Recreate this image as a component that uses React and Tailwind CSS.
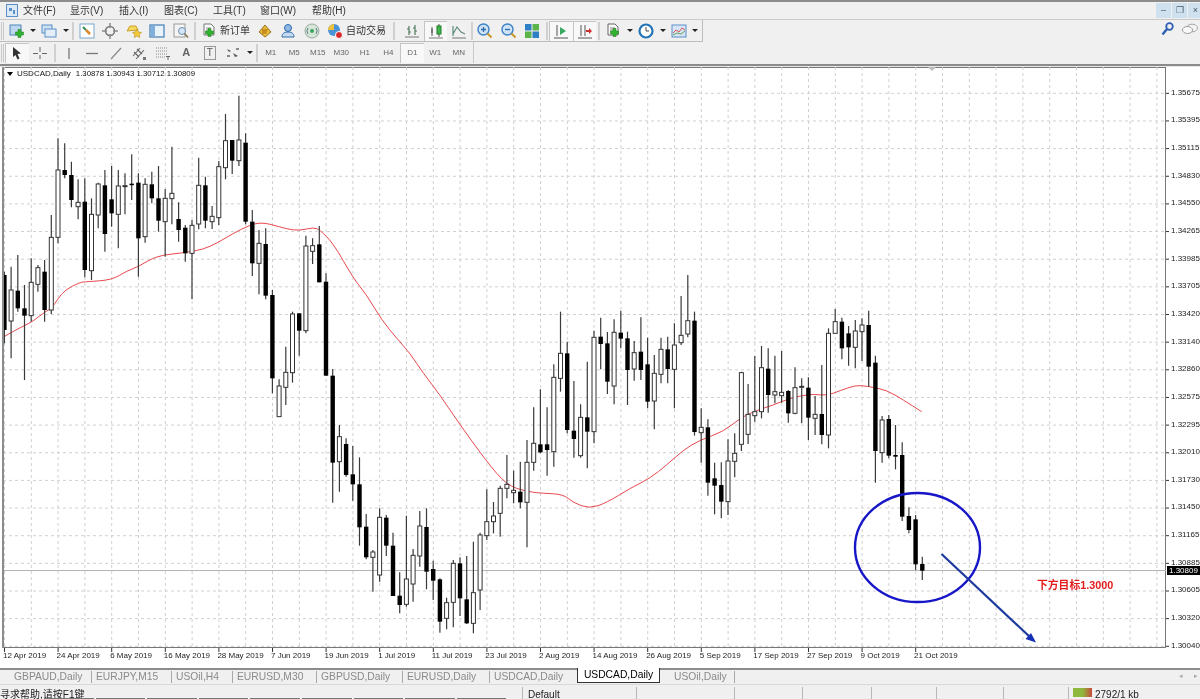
import React from "react";

const FONT = "font-['Liberation_Sans','Noto_Sans_CJK_SC',sans-serif]";

// [high, bodyTop, bodyBottom, low, black] read off the chart, in 3x pixels per block
const SEG_A = [
  [545,555,720,760,1],[530,600,693,805,0],[495,602,655,665,1],[585,655,677,870,1],[505,577,677,695,0],
  [525,533,583,605,0],[510,545,660,695,1],[375,442,660,672,0],[145,240,442,460,0],[160,240,255,265,1],
  [215,255,330,352,1],[268,337,350,388,0],[265,335,540,562,1],[325,373,542,570,0],[278,282,375,415,0],
  [240,286,432,485,1],[228,328,370,410,1],[240,288,373,475,0],[250,287,289,373,0],[193,281,285,330,1],
  [250,278,445,560,1],[265,283,440,458,0],[245,283,325,340,1],[228,325,392,425,1],[297,325,395,500,0],
  [170,310,326,403,0],[337,387,420,455,1],[405,413,490,515,1],[390,406,490,628,0],[203,286,402,418,0],
  [260,286,392,415,1],[348,379,395,417,0],[213,230,383,405,0],[72,152,233,268,0],[150,150,212,252,1],
  [17,150,212,228,0],[130,158,395,403,1],[360,395,520,558,1],[420,460,520,613,0],[415,462,617,628,1],
  [600,615,865,910,1],[868,888,980,980,0],[770,847,892,945,0],[665,672,848,878,0],[670,670,722,797,1],
  [437,468,722,730,0],[445,467,484,522,0],[408,463,577,577,1],[550,575,857,857,1],
];
const SEG_B = [
  [447,467,728,848,1],[615,650,725,815,0],[655,672,765,770,1],[678,763,793,842,1],[712,793,922,977,1],
  [882,920,1012,1018,1],[990,996,1012,1115,0],[865,892,1065,1085,0],[885,893,977,1008,1],[938,977,1128,1128,1],
  [1057,1127,1155,1180,1],[887,1077,1153,1160,0],[987,1006,1092,1145,0],[873,918,1008,1040,0],[865,921,1055,1108,1],
  [1022,1047,1082,1140,1],[1075,1078,1205,1238,1],[1133,1148,1195,1228,0],[1020,1030,1147,1222,0],[1012,1030,1135,1188,1],
  [1008,1138,1210,1212,1],[965,1118,1210,1240,0],[938,945,1110,1170,0],[808,905,947,960,0],[846,888,905,940,0],
  [797,805,880,950,0],[705,793,805,835,0],[752,811,818,850,0],[725,815,847,865,1],[660,727,847,982,0],
  [562,670,727,752,0],[508,673,697,700,1],[562,673,690,767,1],[433,472,695,740,0],[275,400,475,515,0],
  [365,400,630,640,1],[483,632,657,713,1],[553,592,707,713,0],[425,592,635,745,1],[332,352,635,670,0],
];
const SEG_C = [
  [143,200,222,298,1],[186,220,335,372,1],[148,187,348,403,0],[122,188,206,235,1],[185,205,300,405,1],
  [213,248,297,332,0],[142,245,300,330,1],[203,283,395,415,1],[255,310,393,478,0],[203,238,313,340,0],
  [200,238,297,340,1],[160,225,298,415,0],[78,196,218,225,0],[15,152,192,202,0],[125,152,486,497,1],
  [415,472,488,578,0],[448,472,638,677,1],[578,625,647,733,1],[577,645,695,745,1],[508,573,695,735,0],
  [490,550,574,622,0],[305,308,523,543,0],[342,433,493,522,0],[258,425,437,455,0],[228,293,425,445,0],
  [235,296,375,428,1],[257,365,375,400,0],[243,367,377,398,0],[360,363,430,458,1],[292,353,430,433,0],
  [325,349,352,460,0],[322,353,443,510,1],[378,433,445,495,0],
];
const SEG_D = [
  [195,342,405,433,1],[85,100,405,445,0],[27,65,100,100,0],[53,65,145,178,1],[78,100,142,197,1],
  [60,93,142,205,0],[55,75,95,183,0],[32,75,200,260,1],[167,188,453,548,1],[348,360,458,488,0],
  [345,357,467,475,1],[375,465,470,508,1],[427,465,650,663,1],[622,648,690,700,1],[645,658,793,810,1],
  [770,792,812,840,1],
];
const shift = (seg, base) => seg.map(([h, t, b, l, k]) => [base + h / 3, base + t / 3, base + b / 3, base + l / 3, k]);
const CANDLES = [...shift(SEG_A, 90), ...shift(SEG_B, 220), ...shift(SEG_C, 270), ...shift(SEG_D, 300)];

const MA = [
  [4,336.7],[16.7,329.3],[31.7,322.3],[45,311.7],[51.7,308.3],[58.3,298.3],[65,290],[80,282.3],[86.7,281.7],[111.7,280],
  [126.7,271],[138.3,266.7],[156.7,255.7],[185,252.7],[203.3,249.3],[216.7,243.3],[233.3,233.3],[250,225],[260,222.7],
  [270,224],[286.7,229],[300,230.7],[313.3,227.3],[320,230],[333.3,243.3],[353.3,278.3],[366.7,295],[381.7,320],
  [396.7,338.3],[410,353.3],[423.3,373.3],[440,395],[456.7,420],[486.7,461.7],[506.7,485],[526.7,491.7],[543.3,493.3],
  [563.3,494.3],[573.3,502.7],[589.3,508.7],[606.7,502.7],[630,488.3],[650,478.3],[666.7,465],[683.3,450],[700,440],
  [723.3,431.7],[740,418.3],[753.3,411.7],[773.3,405],[790,398.3],[800,396],[813.3,394],[826.7,395.7],[840,390.7],
  [855,385.3],[866.7,386],[886.7,390],[903.3,400],[921.7,411.7],
];
// round the corners off the red line
const maPath = () => {
  let d = `M${MA[0][0]} ${MA[0][1]}`;
  for (let i = 1; i < MA.length - 1; i++) {
    const mx = (MA[i][0] + MA[i + 1][0]) / 2;
    const my = (MA[i][1] + MA[i + 1][1]) / 2;
    d += `Q${MA[i][0]} ${MA[i][1]} ${mx} ${my}`;
  }
  const last = MA[MA.length - 1];
  return d + `L${last[0]} ${last[1]}`;
};

const PRICES = ["1.35675","1.35395","1.35115","1.34830","1.34550","1.34265","1.33985","1.33705","1.33420","1.33140","1.32860","1.32575","1.32295","1.32010","1.31730","1.31450","1.31165","1.30885","1.30605","1.30320","1.30040"];
const DATES = ["12 Apr 2019","24 Apr 2019","6 May 2019","16 May 2019","28 May 2019","7 Jun 2019","19 Jun 2019","1 Jul 2019","11 Jul 2019","23 Jul 2019","2 Aug 2019","14 Aug 2019","26 Aug 2019","5 Sep 2019","17 Sep 2019","27 Sep 2019","9 Oct 2019","21 Oct 2019"];
const MENUS = [["文件(F)","w-[47px]"],["显示(V)","w-[49px]"],["插入(I)","w-[45px]"],["图表(C)","w-[49px]"],["工具(T)","w-[47px]"],["窗口(W)","w-[52px]"],["帮助(H)","w-[40px]"]];
const TABS = [["GBPAUD,Daily","w-[82px]"],["EURJPY,M15","w-[80px]"],["USOil,H4","w-[61px]"],["EURUSD,M30","w-[84px]"],["GBPUSD,Daily","w-[86px]"],["EURUSD,Daily","w-[87px]"],["USDCAD,Daily","w-[88px]"]];
const STATUS = ["w-[523px]","w-[114px]","w-[98px]","w-[68px]","w-[69px]","w-[65px]","w-[67px]","w-[65px]"];
const PERIODS = ["M1","M5","M15","M30","H1","H4"];

const Ic = ({ children }) => (
  <svg width="16" height="16" viewBox="0 0 16 16" fill="none">{children}</svg>
);
const Plus = ({ x = 8, y = 8 }) => (
  <path d={`M${x + 2} ${y}h3v2.5h2.5v3h-2.5v2.5h-3v-2.5h-2.5v-3h2.5z`} fill="#2fb52f" stroke="#1c7a1c" strokeWidth=".5" transform="translate(-1 -1.5)" />
);
const Btn = ({ children, on }) => (
  <div className={`w-[23.5px] h-[20px] flex items-center justify-center shrink-0 ${on ? "bg-[#f8f8f8] border-l border-t border-[#c4c4c4]" : ""}`}>{children}</div>
);
const Caret = () => <div className="w-[9px] shrink-0 flex justify-center"><div className="border-x-[3px] border-x-transparent border-t-[3px] border-t-[#222]" /></div>;
const Sep = ({ className }) => <div className={`h-[18px] flex justify-center shrink-0 ${className}`}><div className="w-[2px] h-full bg-[#d0d0d0]" /></div>;
const Grip = () => <div className="w-[3px] h-[18px] mx-[1px] shrink-0 border-x border-[#c8c8c8]" />;

function Chart() {
  const vs = [];
  for (let x = 4.5; x < 1160; x += 26.8) vs.push(x);
  return (
    <svg viewBox="3 67 1163 581" className="block w-[1163px] h-[581px] overflow-visible">
      <g stroke="#d0d0d0" strokeDasharray="3 3">
        {PRICES.map((_, i) => <line key={i} x1="3" x2="1166" y1={93.3 + 27.65 * i} y2={93.3 + 27.65 * i} />)}
        {vs.map((x) => <line key={x} x1={x} x2={x} y1="67" y2="648" />)}
      </g>
      <line x1="3" x2="1166" y1="570.5" y2="570.5" stroke="#b4b4b4" />
      <path d={maPath()} fill="none" stroke="#e8494f" strokeWidth="1" />
      {CANDLES.map(([h, t, b, l, k], i) => {
        const x = 4.4 + 6.7 * i;
        return (
          <g key={i}>
            <line x1={x} x2={x} y1={h} y2={l} stroke="#3a3a3a" strokeWidth="1.200" />
            {k ? <rect x={x - 2.2} y={t} width="4.4" height={Math.max(b - t, 1.5)} fill="#000" /> : <rect x={x - 2} y={t} width="4" height={Math.max(b - t, 1)} fill="#fff" stroke="#333" />}
          </g>
        );
      })}
      <ellipse cx="917.5" cy="547.5" rx="62.5" ry="54.5" fill="none" stroke="#1616c8" strokeWidth="2.4" />
      <line x1="941.5" y1="554" x2="1031" y2="638" stroke="#1c3a9e" strokeWidth="2.2" />
      <path d="M1036 642.5l-10.500-3.500 5.500-6z" fill="#1430b8" />
      <path d="M928 67h8l-4 4z" fill="#bcbcbc" />
      <g stroke="#333">
        {PRICES.map((_, i) => <line key={i} x1="1166" x2="1169" y1={93.3 + 27.65 * i} y2={93.3 + 27.65 * i} />)}
        {DATES.map((_, i) => <line key={i} x1={4.5 + 53.6 * i} x2={4.5 + 53.6 * i} y1="648" y2="652" />)}
      </g>
    </svg>
  );
}

export default function App() {
  return (
    <div className={`${FONT} w-[1200px] h-[699px] overflow-hidden flex flex-col bg-[#f0f0f0] text-[#333] blur-[0.35px]`}>
      <div className="h-[2px] bg-[#8c8c8c] shrink-0" />

      <div className="h-[17px] shrink-0 flex items-center text-[10px]">
        <div className="w-[23px] flex justify-center">
          <svg width="12" height="13" viewBox="0 0 12 13" fill="none"><rect x=".5" y=".5" width="11" height="12" fill="#dbe8f6" stroke="#5b8fc7" /><path d="M3 4h3v3H3zM7 6h2v4H7z" fill="#5b8fc7" /></svg>
        </div>
        {MENUS.map(([m, w]) => <div key={m} className={w}>{m}</div>)}
        <div className="ml-auto flex gap-[1px] pr-[0px] mr-[-3px]">
          {["–", "❐", "×"].map((c) => <div key={c} className="w-[15px] h-[15px] bg-[#cfe0ee] text-[#44586a] text-[9px] flex items-center justify-center">{c}</div>)}
        </div>
      </div>
      <div className="h-[1px] bg-[#c8c8c8] shrink-0" />

      <div className="relative h-[22px] shrink-0">
        <div className="h-[22px] w-[703px] flex items-center border-r border-b border-[#bdbdbd] text-[10px]">
          <Grip />
          <Btn><Ic><rect x="1" y="2" width="11" height="10" fill="#bcd6ee" stroke="#4d86b8" /><Plus /></Ic></Btn>
          <Caret />
          <Btn><Ic><rect x="1" y="2" width="10" height="8" fill="#cfe0f0" stroke="#5b8fc7" /><rect x="4" y="6" width="11" height="8" fill="#e4eef8" stroke="#5b8fc7" /></Ic></Btn>
          <Caret />
          <Sep className="w-[5px]" />
          <Btn><Ic><rect x="1" y="1" width="14" height="14" fill="#fff" stroke="#7ea6cc" /><path d="M4 4l3 3" stroke="#2e8b57" strokeWidth="2" /><path d="M7 7l4 4" stroke="#d98a2b" strokeWidth="2.500" /></Ic></Btn>
          <Btn><Ic><circle cx="8" cy="8" r="4.500" stroke="#777" strokeWidth="1.500" /><path d="M8 0v5M8 11v5M0 8h5M11 8h5" stroke="#8a8a8a" strokeWidth="1.500" /></Ic></Btn>
          <Btn><Ic><path d="M1 8l3-5h6l2 4z" fill="#f6d860" stroke="#c7a028" /><path d="M11 6l1.500 3 3 .5-2.200 2 .5 3-2.800-1.500-2.800 1.500.5-3-2.200-2 3-.5z" fill="#f3c93c" stroke="#b98f1f" strokeWidth=".6" /></Ic></Btn>
          <Btn><Ic><rect x="1" y="2" width="14" height="12" fill="#e9f1f9" stroke="#4d86b8" strokeWidth="1.300" /><rect x="2" y="3" width="4" height="10" fill="#7fb0dc" /></Ic></Btn>
          <Btn><Ic><rect x="1" y="1" width="11" height="13" fill="#f4f4f4" stroke="#9a9a9a" /><circle cx="9" cy="8" r="3.500" fill="#d4e6f6" stroke="#6d8fae" /><path d="M11.500 10.500l3.500 4" stroke="#8a7a5a" strokeWidth="1.600" /></Ic></Btn>
          <Sep className="w-[5px]" />
          <Btn><Ic><path d="M3 1h7l3 3v8H3z" fill="#fafafa" stroke="#777" /><path d="M5 5h5M5 7h5" stroke="#999" /><Plus x={6} y={7} /></Ic></Btn>
          <div className="w-[33px] shrink-0 -ml-[1px]">新订单</div>
          <Btn><Ic><path d="M8 2l6 7-6 5-6-5z" fill="#e6b93c" stroke="#9a7520" /><path d="M5 6h6l-2 5H5z" fill="#c78f1f" /></Ic></Btn>
          <Btn><Ic><circle cx="8" cy="5" r="3.500" fill="#8db9e4" stroke="#2f6cab" /><path d="M2 14c0-4 3-5 6-5s6 1 6 5z" fill="#c7dcf2" stroke="#2f6cab" /></Ic></Btn>
          <Btn><Ic><circle cx="8" cy="8" r="7" fill="#d6e6d8" stroke="#9aa8a0" /><circle cx="8" cy="8" r="2" fill="#3aa860" /><path d="M4 5a5 5 0 000 6M12 5a5 5 0 010 6" stroke="#5c7a8c" /></Ic></Btn>
          <Btn><Ic><circle cx="7" cy="7" r="6" fill="#4b93d8" /><path d="M1 7a6 6 0 016-6v6z" fill="#f0c23c" /><circle cx="12" cy="12" r="3.500" fill="#d8282c" stroke="#fff" /></Ic></Btn>
          <div className="w-[41px] shrink-0 -ml-[1px]">自动交易</div>
          <Sep className="w-[13px]" />
          <Btn><Ic><path d="M1 14h14" stroke="#777" /><path d="M5 3v9M3 6h2M5 9h2M11 2v10M9 5h2M11 8h2" stroke="#4d7a5a" strokeWidth="1.200" /></Ic></Btn>
          <Btn on><Ic><path d="M1 15h14" stroke="#777" /><path d="M4 4v9M11 1v13" stroke="#555" /><rect x="9" y="3" width="4" height="8" fill="#3fb54a" stroke="#1f7a2a" /><rect x="3" y="6" width="2" height="4" fill="#777" /></Ic></Btn>
          <Btn><Ic><path d="M1 15h14" stroke="#777" /><path d="M2 13V3M2 11l4-7 4 5 4 2" stroke="#5e8a7a" strokeWidth="1.200" /></Ic></Btn>
          <Sep className="w-[3px]" />
          <Btn><Ic><circle cx="6.500" cy="6.500" r="5.500" fill="#cfe3f6" stroke="#3c82c4" strokeWidth="1.400" /><path d="M4 6.500h5M6.500 4v5" stroke="#2f6cab" strokeWidth="1.300" /><path d="M10.500 10.500l4 4" stroke="#c99a2e" strokeWidth="2.200" /></Ic></Btn>
          <Btn><Ic><circle cx="6.500" cy="6.500" r="5.500" fill="#cfe3f6" stroke="#3c82c4" strokeWidth="1.400" /><path d="M4 6.500h5" stroke="#2f6cab" strokeWidth="1.300" /><path d="M10.500 10.500l4 4" stroke="#c99a2e" strokeWidth="2.200" /></Ic></Btn>
          <Btn><Ic><rect x="1" y="1" width="6.500" height="6.500" fill="#2f7fc4" /><rect x="8.500" y="1" width="6.500" height="6.500" fill="#5cb34a" /><rect x="1" y="8.500" width="6.500" height="6.500" fill="#5cb34a" /><rect x="8.500" y="8.500" width="6.500" height="6.500" fill="#2f7fc4" /></Ic></Btn>
          <Sep className="w-[5px]" />
          <Btn on><Ic><path d="M1 15h14M4 2v11" stroke="#555" /><path d="M7 4l6 4-6 4z" fill="#38a860" /></Ic></Btn>
          <Btn on><Ic><path d="M1 15h14M4 2v11M8 2v11" stroke="#555" /><path d="M9 7h3V5l3 3-3 3V9H9z" fill="#cc3030" /></Ic></Btn>
          <Sep className="w-[6px]" />
          <Btn><Ic><path d="M2 1h7l3 3v8H2z" fill="#fafafa" stroke="#666" /><path d="M4 5h5M4 7h4" stroke="#888" /><Plus x={6} y={7} /></Ic></Btn>
          <Caret />
          <Btn><Ic><circle cx="8" cy="8" r="6.500" fill="#fff" stroke="#2273b8" strokeWidth="2.200" /><path d="M8 4v4h3" stroke="#444" /></Ic></Btn>
          <Caret />
          <Btn><Ic><rect x="1" y="2" width="14" height="12" fill="#d6e6f6" stroke="#5b8fc7" /><path d="M2 10l3-3 3 2 3-4 3 2" stroke="#d9534f" /><path d="M2 12l4-2 4 1 4-3" stroke="#63a35c" /></Ic></Btn>
          <Caret />
        </div>
        <div className="absolute right-[2px] top-[2px] flex items-center gap-[8px]">
          <svg width="13" height="14" viewBox="0 0 13 14" fill="none"><circle cx="8.500" cy="4.500" r="3.300" stroke="#2d5fb4" strokeWidth="1.800" /><path d="M6 7l-4.500 5.500" stroke="#2d5fb4" strokeWidth="2.400" /></svg>
          <svg width="16" height="13" viewBox="0 0 16 13" fill="none"><ellipse cx="10" cy="5" rx="5.500" ry="3.800" fill="#f4f4f4" stroke="#a8a8a8" /><ellipse cx="5.500" cy="7" rx="5" ry="3.500" fill="#fafafa" stroke="#9a9a9a" /></svg>
        </div>
      </div>

      <div className="h-[21px] w-[474px] shrink-0 flex items-center border-r border-[#c8c8c8] text-[8px] text-[#666]">
        <Grip />
        <Btn on><svg width="10" height="14" viewBox="0 0 10 14"><path d="M1 1l8 6.500-3.500.5 2 4.500-2 1-2-4.500L1 11z" fill="#333" /></svg></Btn>
        <Btn><Ic><path d="M8 2v5M8 10v4M1 8.500h5M10 8.500h5" stroke="#666" /></Ic></Btn>
        <Sep className="w-[5px]" />
        <Btn><Ic><path d="M8 3v11" stroke="#777" strokeWidth="1.300" /></Ic></Btn>
        <Btn><Ic><path d="M2 8.500h12" stroke="#777" strokeWidth="1.300" /></Ic></Btn>
        <Btn><Ic><path d="M3 14L13 3" stroke="#888" strokeWidth="1.200" /></Ic></Btn>
        <Btn><Ic><path d="M2 11L9 3M5 14l8-9M3 7l5 5M6 4l5 5" stroke="#666" strokeWidth="1.100" /><path d="M12 12h3v3h-3z" fill="#777" /></Ic></Btn>
        <Btn><Ic><path d="M1 3h12M1 6h12M1 9h12M1 12h9" stroke="#888" strokeDasharray="1 1" /><path d="M11 11h4v1h-1.500v3h-1v-3H11z" fill="#666" /></Ic></Btn>
        <Btn><span className="text-[11px] font-bold text-[#666] leading-none">A</span></Btn>
        <Btn><div className="w-[12px] h-[14px] border border-[#999] flex items-center justify-center text-[10px] leading-none text-[#555]">T</div></Btn>
        <Btn><Ic><path d="M2 4l4 2-2 1zM8 8l5 3-3 1z" fill="#555" /><path d="M2 11h3M11 4h3" stroke="#666" strokeWidth="1.400" /></Ic></Btn>
        <Caret />
        <Sep className="w-[5px]" />
        {PERIODS.map((p) => <Btn key={p}>{p}</Btn>)}
        <Btn on>D1</Btn>
        <Btn>W1</Btn>
        <Btn>MN</Btn>
      </div>
      <div className="h-[1px] shrink-0" />
      <div className="h-[2px] bg-[#8c8c8c] shrink-0" />
      <div className="h-[1px] bg-[#e8e8e8] shrink-0" />

      <div className="relative h-[601px] shrink-0 bg-white pl-[3px] text-[8px] text-[#222] leading-none flex">
        <div className="w-[1163px] shrink-0">
          <div className="border border-[#777] w-[1163px] h-[581px]">
            <div className="-m-[1px]"><Chart /></div>
          </div>
          <div className="flex pt-[4px]">
            {DATES.map((d) => <div key={d} className="w-[53.6px] shrink-0">{d}</div>)}
          </div>
        </div>
        <div className="relative pl-[5px] pt-[12px] w-[34px] shrink-0">
          {PRICES.map((p) => <div key={p} className="h-[27.65px] flex items-center">{p}</div>)}
          <div className="absolute left-[1px] top-[499px] w-[33px] h-[9px] bg-black text-white flex items-center pl-[2px]">1.30809</div>
        </div>
        <div className="absolute left-[2px] top-0 w-[2px] h-[581px] bg-[#8c8c8c]" />
        <div className="absolute left-[7px] top-[3px] flex items-center gap-[3px] text-[#111]">
          <div className="border-x-[3px] border-x-transparent border-t-[4px] border-t-black" />
          <span className="ml-[1px]">USDCAD,Daily</span>
          <span className="ml-[2px] text-[7.8px]">1.30878 1.30943 1.30712 1.30809</span>
        </div>
        <div className="absolute left-[1037px] top-[513px] text-[10.8px] font-bold text-[#e21c1c] whitespace-nowrap">下方目标1.3000</div>
      </div>

      <div className="relative h-[16px] shrink-0 flex border-t-2 border-[#8c8c8c] text-[10.3px] text-[#8a8a8a] pl-[10px]">
        {TABS.map(([t, w]) => (
          <div key={t} className={`${w} h-[12px] mt-[1px] pl-[4px] border-r border-[#a8a8a8] flex items-center shrink-0 whitespace-nowrap`}>{t}</div>
        ))}
        <div className="w-[83px] h-[15px] -mt-[2px] -ml-[1px] bg-white border-x border-b border-[#333] text-black flex items-center justify-center shrink-0">USDCAD,Daily</div>
        <div className="w-[75px] h-[12px] mt-[1px] pl-[14px] border-r border-[#a8a8a8] flex items-center shrink-0">USOil,Daily</div>
        <div className="absolute right-[2px] top-0 h-[12px] flex items-center gap-[11px] text-[7px] text-[#aaa]">
          <span>◂</span>
          <span>▸</span>
        </div>
      </div>

      <div className="relative flex-1 min-h-0 flex overflow-hidden text-[10px] text-[#222] border-t border-[#d8d8d8] pt-[2px]">
        {STATUS.map((w, i) => (
          <div key={w + i} className={`${w} h-[16px] border-r border-[#b8b8b8] shrink-0 whitespace-nowrap`}>
            {i === 0 ? "寻求帮助,请按F1键" : i === 1 ? <span className="pl-[5px]">Default</span> : ""}
          </div>
        ))}
        <div className="flex items-start gap-[3px] pl-[4px]">
          <div className="w-[19px] h-[9px] mt-[1px] bg-[linear-gradient(90deg,#8fb83c_50%,#c84a3c)]" />
          <span>2792/1 kb</span>
        </div>
        <div className="absolute left-[44px] bottom-0 flex gap-[2px]">
          {[0, 1, 2, 3, 4, 5, 6, 7, 8].map((n) => <div key={n} className="w-[49.6px] h-[1px] bg-[#777]" />)}
        </div>
      </div>
    </div>
  );
}
